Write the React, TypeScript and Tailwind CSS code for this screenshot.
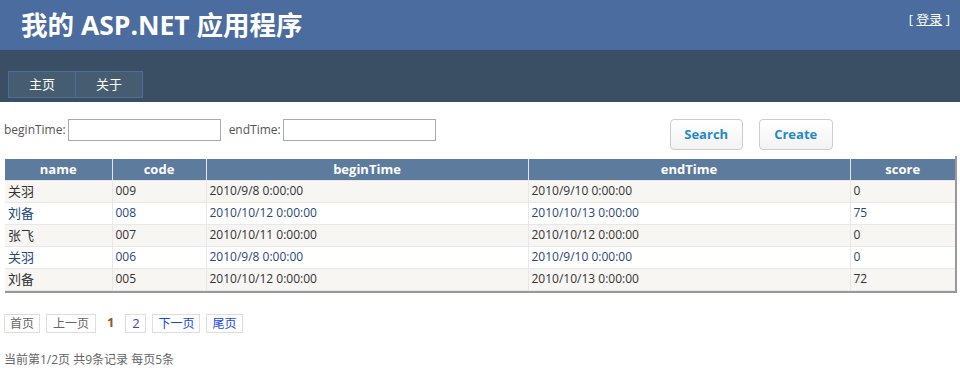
import React from "react";

interface Row {
  name: string;
  code: string;
  beginTime: string;
  endTime: string;
  score: string;
}

const rows: Row[] = [
  { name: "关羽", code: "009", beginTime: "2010/9/8 0:00:00", endTime: "2010/9/10 0:00:00", score: "0" },
  { name: "刘备", code: "008", beginTime: "2010/10/12 0:00:00", endTime: "2010/10/13 0:00:00", score: "75" },
  { name: "张飞", code: "007", beginTime: "2010/10/11 0:00:00", endTime: "2010/10/12 0:00:00", score: "0" },
  { name: "关羽", code: "006", beginTime: "2010/9/8 0:00:00", endTime: "2010/9/10 0:00:00", score: "0" },
  { name: "刘备", code: "005", beginTime: "2010/10/12 0:00:00", endTime: "2010/10/13 0:00:00", score: "72" },
];

const font = "font-['Open_Sans','Noto_Sans_CJK_SC',sans-serif]";

export default function App() {
  return (
    <div className={`w-[960px] h-[379px] bg-white overflow-hidden ${font}`}>
      {/* Header */}
      <div className="h-[50px] bg-[#4b6c9e] flex items-start justify-between">
        <h1 className="pl-[21px] pt-[7px] text-[26.5px] font-bold text-white leading-[36px]">
          我的 ASP.NET 应用程序
        </h1>
        <div className="pr-[10px] pt-[10px] text-[13px] text-white leading-[18px]">
          [ <span className="underline">登录</span> ]
        </div>
      </div>

      {/* Menu */}
      <div className="h-[52px] bg-[#3a4f63] pt-[21px] pl-[8px] flex">
        {["主页", "关于"].map((m) => (
          <div
            key={m}
            className="h-[27px] w-[68px] bg-[#465c71] border border-[#4b6c9e] -ml-px first:ml-0 flex items-center justify-center text-[13px] text-white"
          >
            {m}
          </div>
        ))}
      </div>

      {/* Filters */}
      <div className="flex items-start pt-[17px] pl-[4px] text-[12px] text-[#555]">
        <div className="flex items-center h-[22px]">
          <span>beginTime:</span>
          <input className="ml-[2px] w-[153px] h-[22px] border border-[#aaa] outline-none" />
          <span className="ml-[8px]">endTime:</span>
          <input className="ml-[2px] w-[153px] h-[22px] border border-[#aaa] outline-none" />
        </div>
        <button className="ml-[234px] w-[73px] h-[31px] rounded-[4px] border border-[#ccc] bg-gradient-to-b from-white to-[#f3f3f3] text-[#1f8ac9] text-[13px] font-bold">
          Search
        </button>
        <button className="ml-[16px] w-[74px] h-[31px] rounded-[4px] border border-[#ccc] bg-gradient-to-b from-white to-[#f3f3f3] text-[#1f8ac9] text-[13px] font-bold">
          Create
        </button>
      </div>

      {/* Grid */}
      <div className="mt-[6px] ml-[5px] w-[952px] pt-[3px] border-r-2 border-b-2 border-[#999]">
        <table className="w-[950px] border-collapse text-[12px] table-fixed">
          <colgroup>
            <col className="w-[107px]" />
            <col className="w-[94px]" />
            <col className="w-[322px]" />
            <col className="w-[322px]" />
            <col className="w-[105px]" />
          </colgroup>
          <thead>
            <tr className="bg-[#5d7b9d] text-white text-[13px]">
              {["name", "code", "beginTime", "endTime", "score"].map((h) => (
                <th key={h} className="h-[21px] border-x border-[#e6e6e6] first:border-l-0 last:border-r-0 font-bold text-center leading-[19px]">
                  {h}
                </th>
              ))}
            </tr>
          </thead>
          <tbody>
            {rows.map((r, i) => (
              <tr
                key={r.code}
                className={i % 2 === 0 ? "bg-[#f7f6f3] text-[#333]" : "bg-white text-[#284775]"}
              >
                {[r.name, r.code, r.beginTime, r.endTime, r.score].map((c, j) => (
                  <td
                    key={j}
                    className="h-[22px] p-0 pl-[3px] border border-[#e8e8e8] first:border-l-0 first:text-[13px] last:border-r-0 leading-[20px] whitespace-nowrap"
                  >
                    {c}
                  </td>
                ))}
              </tr>
            ))}
          </tbody>
        </table>
      </div>

      {/* Pager */}
      <div className="mt-[21px] ml-[4px] flex items-center gap-[6px] text-[12px] h-[19px]">
        <span className="border border-[#ddd] px-[5px] h-[19px] leading-[17px] text-[#666]">首页</span>
        <span className="border border-[#ddd] px-[6px] h-[19px] leading-[17px] text-[#666]">上一页</span>
        <span className="px-[5px] font-bold text-[13px] text-[#8b5a3c]">1</span>
        <span className="border border-[#ddd] w-[21px] text-center h-[19px] leading-[17px] text-[13px] text-[#3344cc]">2</span>
        <span className="border border-[#ddd] px-[5px] h-[19px] leading-[17px] text-[#1144ee]">下一页</span>
        <span className="border border-[#ddd] px-[5px] h-[19px] leading-[17px] text-[#1144ee]">尾页</span>
      </div>

      <div className="mt-[18px] ml-[4px] text-[12px] text-[#666]">当前第1/2页 共9条记录 每页5条</div>
    </div>
  );
}
